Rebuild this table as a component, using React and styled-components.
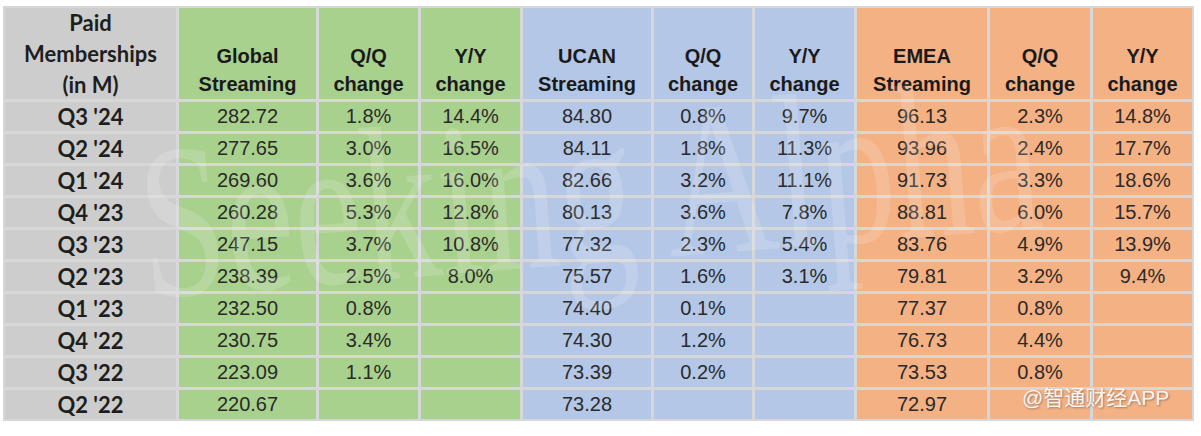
import styled, { createGlobalStyle } from "styled-components";

const tones = {
  grey: "#cdcdcd",
  green: "#a9d18e",
  blue: "#b4c7e7",
  orange: "#f4b183",
};

const columns = [
  { title: ["Global", "Streaming"], tone: "green" },
  { title: ["Q/Q", "change"], tone: "green" },
  { title: ["Y/Y", "change"], tone: "green" },
  { title: ["UCAN", "Streaming"], tone: "blue" },
  { title: ["Q/Q", "change"], tone: "blue" },
  { title: ["Y/Y", "change"], tone: "blue" },
  { title: ["EMEA", "Streaming"], tone: "orange" },
  { title: ["Q/Q", "change"], tone: "orange" },
  { title: ["Y/Y", "change"], tone: "orange" },
];

const rows = [
  ["Q3 '24", "282.72", "1.8%", "14.4%", "84.80", "0.8%", "9.7%", "96.13", "2.3%", "14.8%"],
  ["Q2 '24", "277.65", "3.0%", "16.5%", "84.11", "1.8%", "11.3%", "93.96", "2.4%", "17.7%"],
  ["Q1 '24", "269.60", "3.6%", "16.0%", "82.66", "3.2%", "11.1%", "91.73", "3.3%", "18.6%"],
  ["Q4 '23", "260.28", "5.3%", "12.8%", "80.13", "3.6%", "7.8%", "88.81", "6.0%", "15.7%"],
  ["Q3 '23", "247.15", "3.7%", "10.8%", "77.32", "2.3%", "5.4%", "83.76", "4.9%", "13.9%"],
  ["Q2 '23", "238.39", "2.5%", "8.0%", "75.57", "1.6%", "3.1%", "79.81", "3.2%", "9.4%"],
  ["Q1 '23", "232.50", "0.8%", "", "74.40", "0.1%", "", "77.37", "0.8%", ""],
  ["Q4 '22", "230.75", "3.4%", "", "74.30", "1.2%", "", "76.73", "4.4%", ""],
  ["Q3 '22", "223.09", "1.1%", "", "73.39", "0.2%", "", "73.53", "0.8%", ""],
  ["Q2 '22", "220.67", "", "", "73.28", "", "", "72.97", "", ""],
];

function App() {
  return (
    <>
      <GlobalStyle />
      <Wrap>
        <Table>
          <CornerCell>
            <span>Paid</span>
            <span>Memberships</span>
            <span>(in M)</span>
          </CornerCell>
          {columns.map((col, i) => (
            <HeadCell key={i} $tone={col.tone}>
              {col.title.map((line) => (
                <span key={line}>{line}</span>
              ))}
            </HeadCell>
          ))}
          {rows.map((row) =>
            row.map((value, i) =>
              i === 0 ? (
                <QuarterCell key={row[0] + i}>{value}</QuarterCell>
              ) : (
                <Cell key={row[0] + i} $tone={columns[i - 1].tone}>
                  {value}
                </Cell>
              )
            )
          )}
        </Table>
        <Watermark>Seeking Alpha</Watermark>
        <Credit>@智通财经APP</Credit>
      </Wrap>
    </>
  );
}

export default App;

const GlobalStyle = createGlobalStyle`
  html, body {
    margin: 0;
    background: #ffffff;
  }
  body {
    font-family: "Liberation Sans", Arial, sans-serif;
  }
`;

const Wrap = styled.div`
  position: relative;
  width: 1201px;
  height: 436px;
  padding: 6px 0 0 3px;
  box-sizing: border-box;
`;

const Table = styled.div`
  display: grid;
  grid-template-columns: 171px 137px 99px 99px 128px 98px 99px 130px 100px 99px;
  grid-template-rows: 91px repeat(10, 29px);
  gap: 3px;
  padding: 2px;
  width: max-content;
  background: #d5d7d9;
`;

const HeadCell = styled.div`
  display: flex;
  flex-direction: column;
  justify-content: flex-end;
  align-items: center;
  padding-bottom: 1px;
  background: ${({ $tone }) => tones[$tone]};
  font-family: "Liberation Sans", Arial, sans-serif;
  font-weight: 700;
  font-size: 20px;
  line-height: 28px;
  color: #1a1a1a;
`;

const CornerCell = styled(HeadCell)`
  justify-content: center;
  padding-bottom: 0;
  background: ${tones.grey};
  font-family: Lato, "Open Sans", sans-serif;
  font-size: 22px;
  line-height: 31px;
  color: #1e1e1e;
`;

const Cell = styled.div`
  display: flex;
  align-items: center;
  justify-content: center;
  background: ${({ $tone }) => tones[$tone]};
  font-family: "Liberation Sans", Arial, sans-serif;
  font-size: 20px;
  color: #2a2a2a;
`;

const QuarterCell = styled(Cell)`
  background: ${tones.grey};
  font-family: Lato, "Open Sans", sans-serif;
  font-weight: 700;
  font-size: 22px;
  color: #1e1e1e;
`;

const Watermark = styled.div`
  position: absolute;
  left: 148px;
  top: 114px;
  font-family: "Liberation Serif", "Times New Roman", serif;
  font-size: 220px;
  line-height: 1;
  white-space: nowrap;
  color: rgba(255, 255, 255, 0.16);
  transform: rotate(-4.5deg) scaleX(0.7);
  transform-origin: left bottom;
  pointer-events: none;
`;

const Credit = styled.div`
  position: absolute;
  left: 1022px;
  top: 381px;
  font-family: "Liberation Sans", "Noto Sans CJK SC", sans-serif;
  font-size: 21px;
  color: rgba(255, 255, 255, 0.92);
  text-shadow: 1px 1px 2px rgba(90, 90, 90, 0.6);
  white-space: nowrap;
`;
